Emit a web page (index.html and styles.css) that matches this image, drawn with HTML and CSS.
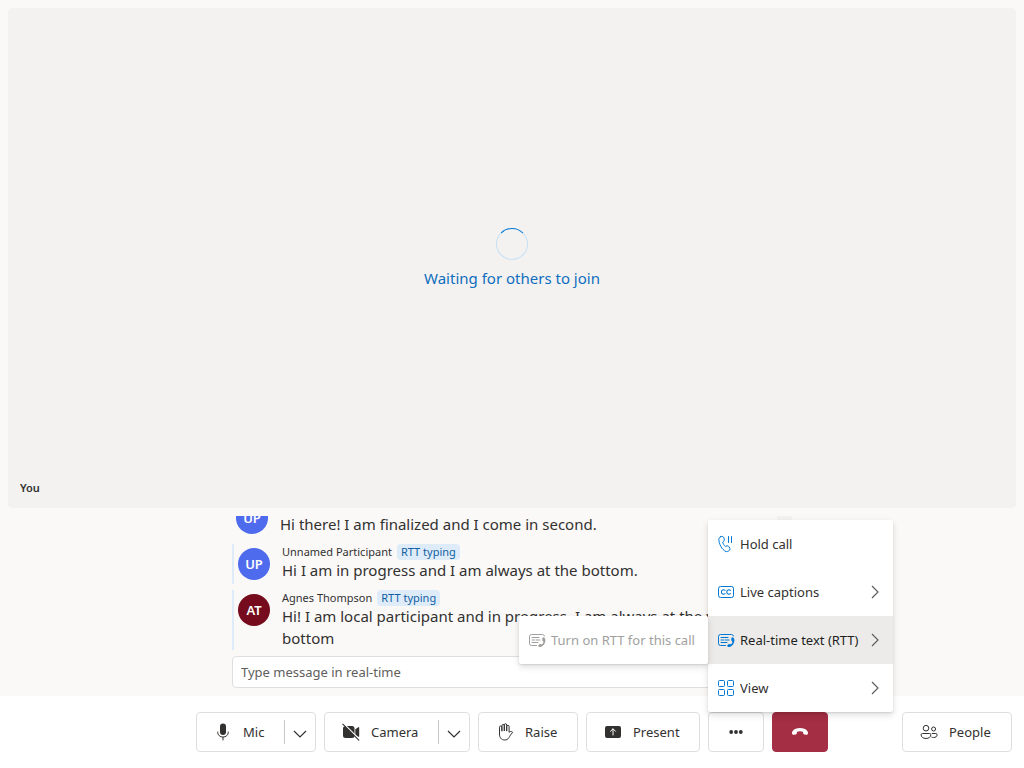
FILE: index.html
```html
<!DOCTYPE html>
<html lang="en">
<head>
<meta charset="utf-8">
<meta name="viewport" content="width=device-width, initial-scale=1">
<title>Call</title>
<link rel="stylesheet" href="styles.css">
</head>
<body>
<svg class="symbols" aria-hidden="true">
  <symbol id="rtt" viewBox="0 0 20 20">
    <path d="M9.500 15.500H4.500a2 2 0 0 1-2-2v-7a2 2 0 0 1 2-2h11a2 2 0 0 1 2 1.500M5 7.500h7M5 10h2.500M9 10h4M5 12.500h6" fill="none" stroke="currentColor" stroke-linecap="round"/>
    <path d="M16 7.300c1.700.2 2.600 1.600 2.400 3.500-.3 3-2.300 5.600-4.600 6.100-1.200.3-2.300-.2-2.500-1-.2-.8.900-1.900 1.900-1.900.7 0 1 .5 1.600.3 1-.4 1.700-1.700 1.600-2.600-.1-.5-1-.7-1.100-1.500-.1-1 0-2.500.7-2.900z" fill="currentColor"/>
  </symbol>
  <symbol id="chevron-right" viewBox="0 0 16 16">
    <path d="M5 2l6 6-6 6" fill="none" stroke="currentColor" stroke-width="1.200"/>
  </symbol>
  <symbol id="chevron-down" viewBox="0 0 16 16">
    <path d="M2 5l6 6 6-6" fill="none" stroke="currentColor" stroke-width="1.200"/>
  </symbol>
</svg>

<div class="call">
  <main class="stage">
    <div class="waiting" role="status">
      <span class="spinner"></span>
      <p class="waiting-text">Waiting for others to join</p>
    </div>
    <span class="tile-name">You</span>
  </main>

  <section class="captions" aria-label="Real-time text">
    <div class="caption-scroll">
      <ul class="caption-list">
        <li class="caption caption-final">
          <span class="avatar avatar-blue">UP</span>
          <div class="caption-body">
            <div class="caption-head">Unnamed Participant</div>
            <p class="caption-text">Hi there! I am finalized and I come in second.</p>
          </div>
        </li>
        <li class="caption">
          <span class="avatar avatar-blue">UP</span>
          <div class="caption-body">
            <div class="caption-head">Unnamed Participant <span class="badge">RTT typing</span></div>
            <p class="caption-text">Hi I am in progress and I am always at the bottom.</p>
          </div>
        </li>
        <li class="caption">
          <span class="avatar avatar-red">AT</span>
          <div class="caption-body">
            <div class="caption-head">Agnes Thompson <span class="badge">RTT typing</span></div>
            <p class="caption-text">Hi! I am local participant and in progress. I am always at the very bottom</p>
          </div>
        </li>
      </ul>
      <div class="scrollbar"></div>
    </div>
    <input class="message" type="text" placeholder="Type message in real-time" aria-label="Type message in real-time">
  </section>

  <footer class="controls">
    <div class="controls-center">
      <div class="split split-mic">
        <button class="split-main" type="button">
          <svg class="icon" viewBox="0 0 20 20"><rect x="7" y="1.500" width="6" height="11.500" rx="3" fill="currentColor"/><path d="M4.700 10v.3a5.300 4.800 0 0 0 10.600 0V10M10 15.300v2.700" fill="none" stroke="currentColor" stroke-linecap="round"/></svg>
          Mic
        </button>
        <button class="split-more" type="button" aria-label="Microphone options"><svg class="icon-small"><use href="#chevron-down"/></svg></button>
      </div>
      <div class="split split-camera">
        <button class="split-main" type="button">
          <svg class="icon" viewBox="0 0 20 20"><rect x="2" y="4" width="11.500" height="12" rx="2.500" fill="currentColor"/><path d="M14.300 7.300l3-2.100c.4-.2.900 0 .9.500v8.600c0 .5-.5.700-.9.500l-3-2.100z" fill="currentColor"/><path d="M2.700 1.800l16 16" stroke="#fff" stroke-width="1.400"/><path d="M1.800 2.200l16 16" stroke="currentColor" stroke-width="1.100" stroke-linecap="round"/></svg>
          Camera
        </button>
        <button class="split-more" type="button" aria-label="Camera options"><svg class="icon-small"><use href="#chevron-down"/></svg></button>
      </div>
      <button class="button button-raise" type="button">
        <svg class="icon" viewBox="0 0 20 20"><path d="M4.500 10.500V5.200a1.200 1.200 0 0 1 2.400 0V9M6.900 8.500V3.700a1.200 1.200 0 0 1 2.400 0V8.500M9.300 8.500V3a1.200 1.200 0 0 1 2.400 0v5.800M11.700 8.500V4.500a1.200 1.200 0 0 1 2.400 0v5.800c1-.9 2.300-1 3.100-.5.400.3.400.8 0 1.200-1.600 1.400-2.200 3-3.300 4.700-.9 1.500-2.200 2.300-4.200 2.300-3.600 0-5.200-2.600-5.200-6v-2" fill="none" stroke="currentColor" stroke-linecap="round" stroke-linejoin="round"/></svg>
        Raise
      </button>
      <button class="button button-present" type="button">
        <svg class="icon" viewBox="0 0 20 20"><rect x="2" y="4" width="16" height="12" rx="2" fill="currentColor"/><path d="M10 13V7M7.500 9.300L10 6.800l2.500 2.500" fill="none" stroke="#fff" stroke-linecap="round" stroke-linejoin="round"/></svg>
        Present
      </button>
      <div class="more">
        <button class="button button-icon" type="button" aria-label="More" aria-expanded="true">
          <svg class="icon" viewBox="0 0 20 20" fill="currentColor"><circle cx="5.200" cy="10" r="1.900"/><circle cx="10" cy="10" r="1.900"/><circle cx="14.800" cy="10" r="1.900"/></svg>
        </button>
        <div class="menu" role="menu">
          <button class="menu-item" type="button" role="menuitem">
            <svg class="icon menu-icon" viewBox="0 0 20 20"><path d="M4.700 2.700l1-.3c.8-.2 1.500.1 1.800.8l.8 1.900c.3.600.1 1.300-.4 1.800L6.700 8c.2 1.500 1.400 3.500 2.700 4.400l1.600-.5c.7-.2 1.300 0 1.700.6l1.100 1.600c.4.600.3 1.400-.2 1.900l-.7.800c-.8.700-1.900 1-2.900.7C5.900 16 2.700 9.500 2.900 5.200c0-1.200.8-2.200 1.800-2.500zM12.500 2.500v6M15.500 2.500v6" fill="none" stroke="currentColor" stroke-linecap="round" stroke-linejoin="round"/></svg>
            <span class="menu-label">Hold call</span>
          </button>
          <button class="menu-item" type="button" role="menuitem">
            <svg class="icon menu-icon" viewBox="0 0 20 20"><rect x="2.500" y="4.500" width="15" height="11" rx="2" fill="none" stroke="currentColor"/><path d="M9 8.300C7.500 7 5.400 8 5.400 10s2.100 3 3.600 1.700M14.400 8.300c-1.500-1.300-3.600-.3-3.600 1.700s2.100 3 3.600 1.700" fill="none" stroke="currentColor" stroke-width="1.100" stroke-linecap="round"/></svg>
            <span class="menu-label">Live captions</span>
            <svg class="icon-small menu-chevron"><use href="#chevron-right"/></svg>
          </button>
          <div class="menu-group">
            <button class="menu-item menu-item-active" type="button" role="menuitem" aria-expanded="true">
              <svg class="icon menu-icon"><use href="#rtt"/></svg>
              <span class="menu-label">Real-time text (RTT)</span>
              <svg class="icon-small menu-chevron"><use href="#chevron-right"/></svg>
            </button>
            <div class="submenu" role="menu">
              <button class="menu-item" type="button" role="menuitem" disabled>
                <svg class="icon menu-icon"><use href="#rtt"/></svg>
                <span class="menu-label">Turn on RTT for this call</span>
              </button>
            </div>
          </div>
          <button class="menu-item" type="button" role="menuitem">
            <svg class="icon menu-icon" viewBox="0 0 20 20" fill="none" stroke="currentColor"><rect x="2.500" y="2.500" width="6" height="6" rx="1"/><rect x="11.500" y="2.500" width="6" height="6" rx="1"/><rect x="2.500" y="11.500" width="6" height="6" rx="1"/><rect x="11.500" y="11.500" width="6" height="6" rx="1"/></svg>
            <span class="menu-label">View</span>
            <svg class="icon-small menu-chevron"><use href="#chevron-right"/></svg>
          </button>
        </div>
      </div>
      <button class="button button-icon button-leave" type="button" aria-label="Leave">
        <svg class="icon" viewBox="0 0 20 20"><path d="M10 6c3.300 0 5.800 1 7.100 2.700.8 1 1.100 2 .8 3.100-.2.800-.9 1.200-1.700 1l-1.700-.3c-.7-.1-1.200-.7-1.300-1.300l-.2-1.400a8.500 8.500 0 0 0-6 0l-.2 1.400c-.1.600-.6 1.200-1.300 1.300l-1.700.3c-.8.200-1.500-.2-1.700-1-.3-1.100 0-2.100.8-3.100C4.200 7 6.700 6 10 6z" fill="currentColor"/></svg>
      </button>
    </div>
    <div class="controls-side">
      <button class="button button-people" type="button">
        <svg class="icon" viewBox="0 0 20 20" fill="none" stroke="currentColor"><circle cx="7" cy="6.200" r="2.800"/><circle cx="14.600" cy="7" r="2"/><path d="M3.500 11.500h7a1.300 1.300 0 0 1 1.300 1.300c0 2.200-2 3.700-4.800 3.700s-4.900-1.500-4.900-3.700a1.400 1.400 0 0 1 1.400-1.300zM12.800 11.500h4a1.300 1.300 0 0 1 1.300 1.300c0 1.700-1.500 2.700-3.500 2.700-.8 0-1.500-.1-2.100-.4"/></svg>
        People
      </button>
    </div>
  </footer>
</div>
</body>
</html>
```
FILE: styles.css
```css
* {
  box-sizing: border-box;
}

body {
  margin: 0;
  background: #faf9f8;
  color: #323130;
  font-family: "Segoe UI", "Noto Sans", "Open Sans", sans-serif;
  font-size: 13px;
}

button,
input {
  font: inherit;
  color: inherit;
}

p,
ul {
  margin: 0;
  padding: 0;
}

.symbols {
  position: absolute;
  width: 0;
  height: 0;
}

.icon {
  flex: none;
  width: 20px;
  height: 20px;
}

.icon-small {
  flex: none;
  width: 16px;
  height: 16px;
}

.call {
  display: flex;
  flex-direction: column;
  min-height: 100vh;
}

.stage {
  position: relative;
  flex: 1;
  display: flex;
  align-items: center;
  justify-content: center;
  margin: 8px;
  border-radius: 4px;
  background: #f3f2f1;
}

.waiting {
  display: flex;
  flex-direction: column;
  align-items: center;
  gap: 7px;
  color: #106ebe;
}

.spinner {
  width: 32px;
  height: 32px;
  border: 1px solid #c7e0f4;
  border-top-color: #0078d4;
  border-radius: 50%;
}

.waiting-text {
  font-size: 15px;
  line-height: 22px;
}

.tile-name {
  position: absolute;
  left: 12px;
  bottom: 12px;
  font-size: 11px;
  font-weight: 600;
  line-height: 16px;
}

.captions {
  width: 100%;
  max-width: 560px;
  margin: 0 auto;
  padding-bottom: 8px;
}

.caption-scroll {
  display: flex;
  height: 134px;
  overflow: hidden;
}

.caption-list {
  flex: 1;
  display: flex;
  flex-direction: column;
  justify-content: flex-end;
  gap: 6px;
  list-style: none;
}

.scrollbar {
  width: 15px;
  background: #f3f2f1;
}

.caption {
  flex: none;
  display: flex;
  gap: 12px;
  min-height: 40px;
  padding-left: 4px;
  border-left: 2px solid #deecf9;
}

.caption-final {
  border-left: 0;
}

.avatar {
  flex: none;
  width: 32px;
  height: 32px;
  margin-top: 4px;
  border-radius: 50%;
  color: #fff;
  font-size: 13px;
  font-weight: 600;
  line-height: 32px;
  text-align: center;
}

.avatar-blue {
  background: #4f6bed;
}

.avatar-red {
  background: #750b1c;
}

.caption-head {
  display: flex;
  align-items: center;
  gap: 5px;
  font-size: 11px;
  line-height: 16px;
}

.badge {
  padding: 0 4px;
  border-radius: 4px;
  background: #deecf9;
  color: #115ea3;
}

.caption-text {
  margin-top: -1px;
  padding-bottom: 1px;
  font-size: 15px;
  line-height: 22px;
}

.message {
  display: block;
  width: 100%;
  height: 32px;
  margin-top: 6px;
  padding: 0 8px;
  border: 1px solid #e1dfdd;
  border-radius: 4px;
  background: #fff;
}

.message::placeholder {
  color: #605e5c;
  opacity: 1;
}

.controls {
  display: grid;
  grid-template-columns: 1fr auto 1fr;
  align-items: center;
  padding: 16px 12px;
  background: #fff;
}

.controls-center {
  grid-column: 2;
  display: flex;
  gap: 8px;
}

.controls-side {
  justify-self: end;
}

.button,
.split {
  display: flex;
  align-items: center;
  height: 40px;
  border: 1px solid #e1dfdd;
  border-radius: 4px;
  background: #fff;
}

.button {
  gap: 10px;
  padding: 0 16px;
}

.split-main {
  flex: 1;
  display: flex;
  align-items: center;
  gap: 10px;
  height: 24px;
  padding: 0 0 0 16px;
  border: 0;
  border-right: 1px solid #c8c6c4;
  background: none;
}

.split-more {
  display: flex;
  align-items: center;
  justify-content: center;
  width: 30px;
  height: 38px;
  padding: 4px 0 0;
  border: 0;
  background: none;
}

.split-mic {
  min-width: 120px;
}

.split-camera {
  min-width: 146px;
}

.button-raise {
  min-width: 100px;
}

.button-present {
  min-width: 114px;
}

.button-people {
  min-width: 110px;
}

.button-icon {
  justify-content: center;
  width: 56px;
}

.button-leave {
  border-color: #a42e43;
  background: #a42e43;
  color: #fff;
}

.more {
  position: relative;
}

.menu {
  position: absolute;
  bottom: 100%;
  left: 0;
  width: 185px;
  border-radius: 2px;
  background: #fff;
  box-shadow: 0 3px 7px rgba(0, 0, 0, 0.13), 0 1px 2px rgba(0, 0, 0, 0.11);
}

.menu-group {
  position: relative;
}

.submenu {
  position: absolute;
  top: 0;
  right: 100%;
  width: 189px;
  border-radius: 2px;
  background: #fff;
  box-shadow: 0 3px 7px rgba(0, 0, 0, 0.13), 0 1px 2px rgba(0, 0, 0, 0.11);
}

.menu-item {
  display: flex;
  align-items: center;
  gap: 4px;
  width: 100%;
  height: 48px;
  padding: 0 10px 0 8px;
  border: 0;
  background: none;
  text-align: left;
  white-space: nowrap;
}

.menu-item:disabled {
  color: #a19f9d;
}

.menu-item-active {
  background: #edebe9;
  color: #201f1e;
}

.menu-icon {
  color: #0078d4;
}

.menu-item:disabled .menu-icon {
  color: #a19f9d;
}

.menu-label {
  flex: 1;
}

.menu-chevron {
  color: #605e5c;
}
```
